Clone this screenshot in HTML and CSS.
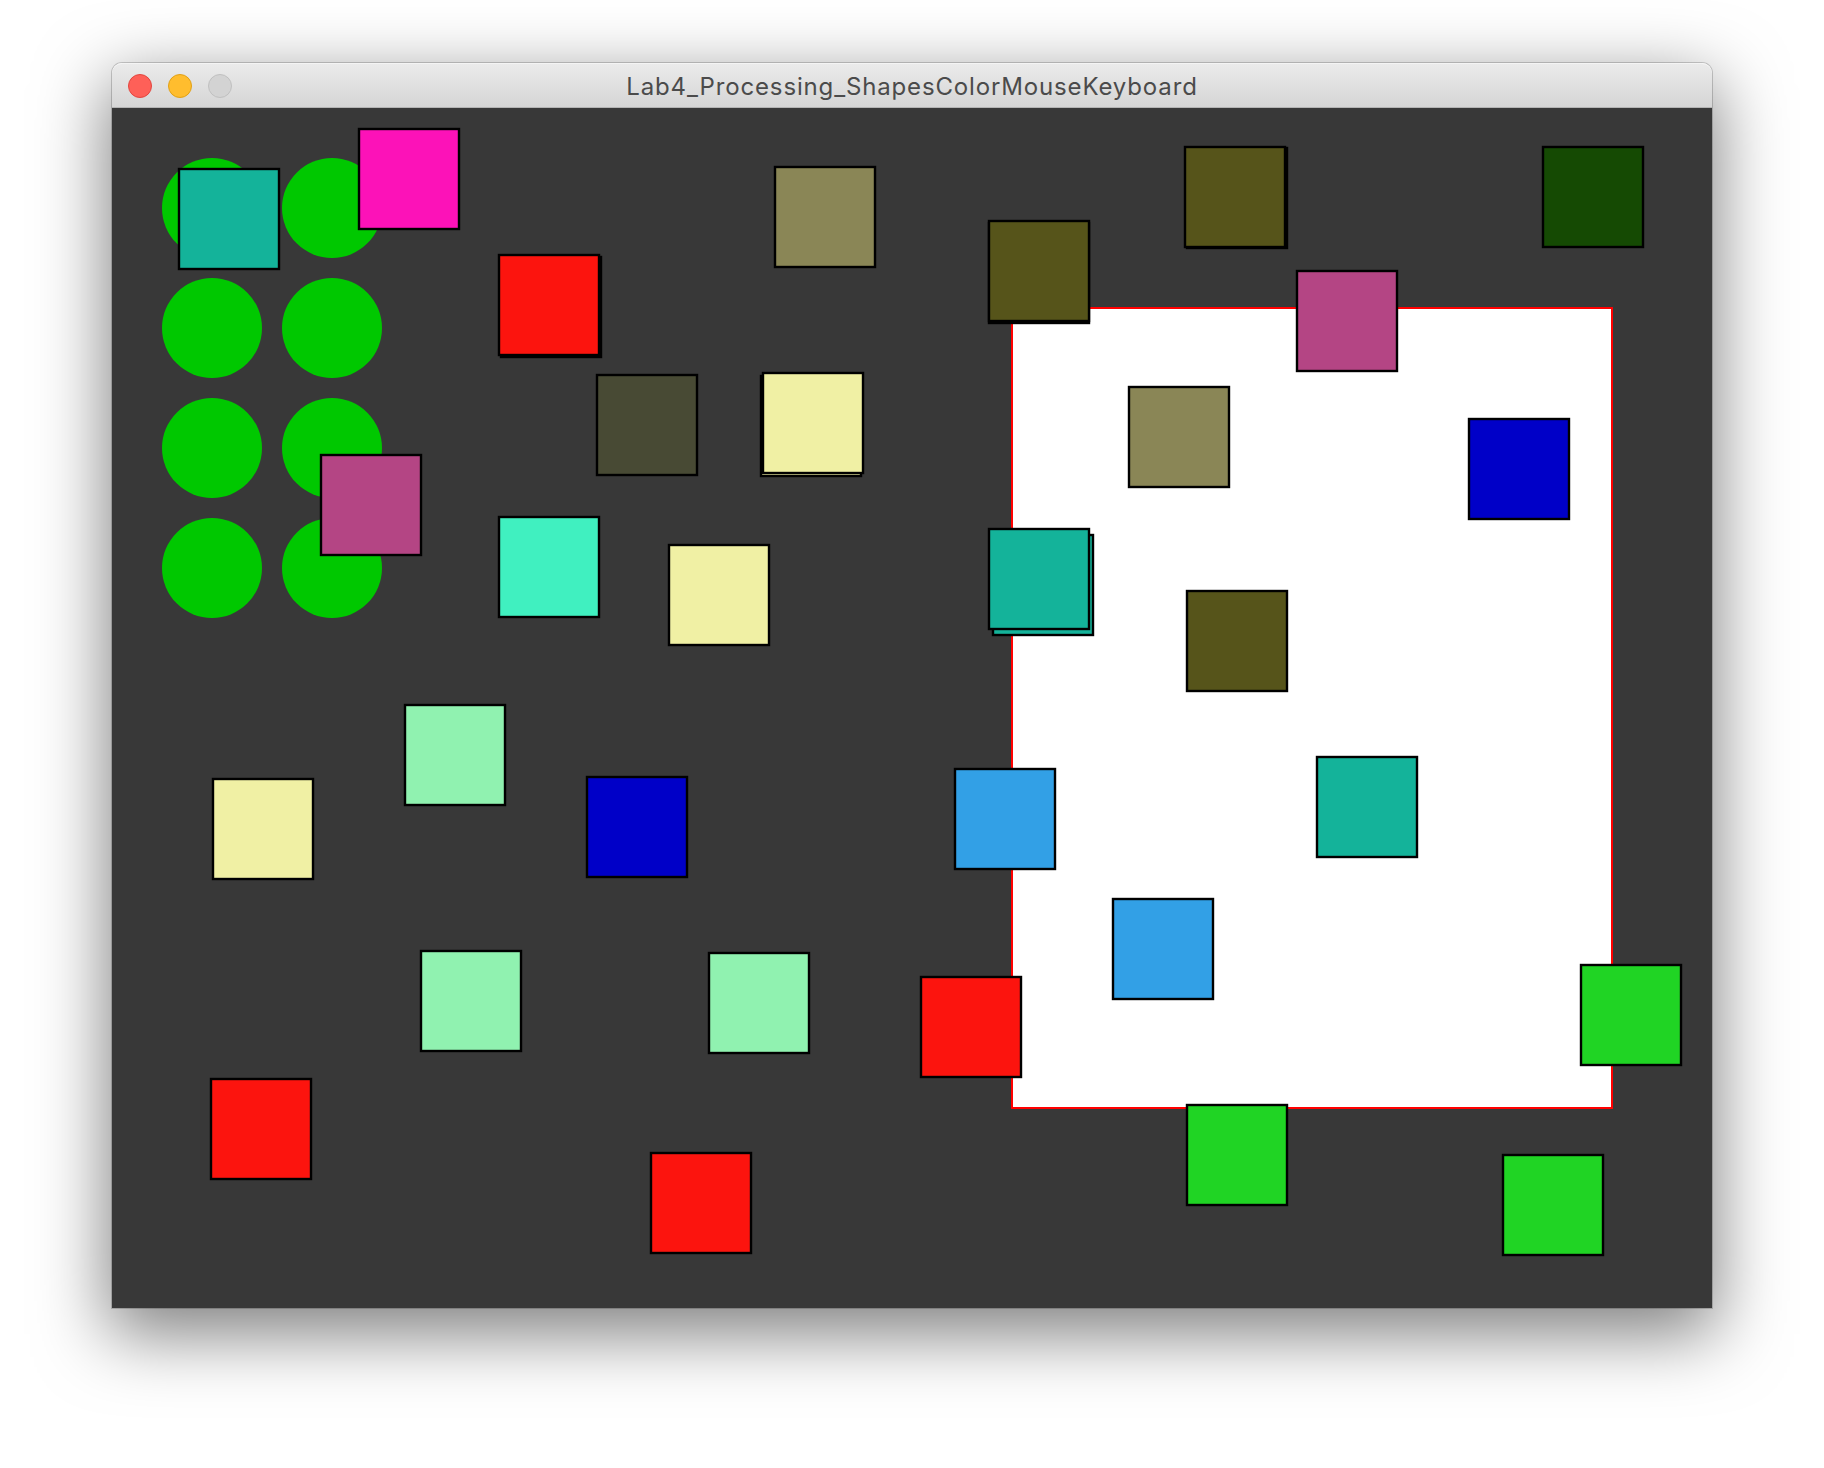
FILE: index.html
```html
<!DOCTYPE html>
<html lang="en">
<head>
<meta charset="utf-8">
<title>Lab4_Processing_ShapesColorMouseKeyboard</title>
<link rel="stylesheet" href="styles.css">
</head>
<body>
<div class="desktop">
  <div class="window">
    <div class="titlebar">
      <div class="lights">
        <span class="light light-close"></span>
        <span class="light light-min"></span>
        <span class="light light-zoom"></span>
      </div>
      <div class="title">Lab4_Processing_ShapesColorMouseKeyboard</div>
      <div class="spacer"></div>
    </div>
    <svg class="canvas" viewBox="0 0 1600 1200" width="1600" height="1200" xmlns="http://www.w3.org/2000/svg">
      <rect class="bg" x="0" y="0" width="1600" height="1200"/>
      <g class="dots">
        <circle cx="100" cy="100" r="50"/>
        <circle cx="220" cy="100" r="50"/>
        <circle cx="100" cy="220" r="50"/>
        <circle cx="220" cy="220" r="50"/>
        <circle cx="100" cy="340" r="50"/>
        <circle cx="220" cy="340" r="50"/>
        <circle cx="100" cy="460" r="50"/>
        <circle cx="220" cy="460" r="50"/>
      </g>
      <rect class="panel" x="900" y="200" width="600" height="800"/>
      <g class="squares">
        <rect class="c-red" x="389" y="149" width="100" height="100"/>
        <rect class="c-yellow" x="649" y="268" width="100" height="100"/>
        <rect class="c-olive" x="877" y="115" width="100" height="100"/>
        <rect class="c-olive" x="1075" y="40" width="100" height="100"/>
        <rect class="c-teal" x="881" y="427" width="100" height="100"/>

        <rect class="c-teal" x="67" y="61" width="100" height="100"/>
        <rect class="c-magenta" x="247" y="21" width="100" height="100"/>
        <rect class="c-red" x="387" y="147" width="100" height="100"/>
        <rect class="c-khaki" x="663" y="59" width="100" height="100"/>
        <rect class="c-olive" x="877" y="113" width="100" height="100"/>
        <rect class="c-olive" x="1073" y="39" width="100" height="100"/>
        <rect class="c-forest" x="1431" y="39" width="100" height="100"/>
        <rect class="c-pink" x="1185" y="163" width="100" height="100"/>
        <rect class="c-slate" x="485" y="267" width="100" height="100"/>
        <rect class="c-yellow" x="651" y="265" width="100" height="100"/>
        <rect class="c-pink" x="209" y="347" width="100" height="100"/>
        <rect class="c-aqua" x="387" y="409" width="100" height="100"/>
        <rect class="c-yellow" x="557" y="437" width="100" height="100"/>
        <rect class="c-teal" x="877" y="421" width="100" height="100"/>
        <rect class="c-khaki" x="1017" y="279" width="100" height="100"/>
        <rect class="c-blue" x="1357" y="311" width="100" height="100"/>
        <rect class="c-olive" x="1075" y="483" width="100" height="100"/>
        <rect class="c-mint" x="293" y="597" width="100" height="100"/>
        <rect class="c-yellow" x="101" y="671" width="100" height="100"/>
        <rect class="c-blue" x="475" y="669" width="100" height="100"/>
        <rect class="c-sky" x="843" y="661" width="100" height="100"/>
        <rect class="c-teal" x="1205" y="649" width="100" height="100"/>
        <rect class="c-sky" x="1001" y="791" width="100" height="100"/>
        <rect class="c-mint" x="309" y="843" width="100" height="100"/>
        <rect class="c-mint" x="597" y="845" width="100" height="100"/>
        <rect class="c-red" x="809" y="869" width="100" height="100"/>
        <rect class="c-green" x="1469" y="857" width="100" height="100"/>
        <rect class="c-red" x="99" y="971" width="100" height="100"/>
        <rect class="c-red" x="539" y="1045" width="100" height="100"/>
        <rect class="c-green" x="1075" y="997" width="100" height="100"/>
        <rect class="c-green" x="1391" y="1047" width="100" height="100"/>
      </g>
    </svg>
  </div>
</div>
</body>
</html>
```

FILE: styles.css
```css
html, body {
  margin: 0;
  padding: 0;
  background: #ffffff;
}

.desktop {
  width: 1824px;
  height: 1468px;
  padding: 63px 0 0 112px;
  box-sizing: border-box;
  overflow: hidden;
}

.window {
  width: 1600px;
  display: flex;
  flex-direction: column;
  border-radius: 10px 10px 0 0;
  box-shadow: 0 22px 70px 4px rgba(0, 0, 0, 0.5), 0 0 0 1px rgba(0, 0, 0, 0.18);
}

.titlebar {
  height: 45px;
  box-sizing: border-box;
  display: grid;
  grid-template-columns: 1fr auto 1fr;
  align-items: center;
  background: linear-gradient(to bottom, #ebebeb 0%, #d5d5d5 100%);
  border-top: 1px solid #f4f4f4;
  border-bottom: 1px solid #b4b4b4;
  border-radius: 10px 10px 0 0;
  padding: 0 16px;
}

.lights {
  display: flex;
  gap: 16px;
  align-items: center;
  padding-top: 1px;
}

.light {
  width: 24px;
  height: 24px;
  border-radius: 50%;
  box-sizing: border-box;
}

.light-close {
  background: #fe6058;
  border: 1px solid #e2463f;
}

.light-min {
  background: #ffbd2e;
  border: 1px solid #e1a116;
}

.light-zoom {
  background: #d3d3d3;
  border: 1px solid #c0c0c0;
}

.title {
  font-family: Inter, "Noto Sans", sans-serif;
  font-size: 24px;
  color: #4b4b4b;
  letter-spacing: 0.85px;
  white-space: nowrap;
  line-height: 1;
  padding-top: 2px;
}

.canvas {
  display: block;
  width: 1600px;
  height: 1200px;
}

.bg {
  fill: #383838;
}

.dots circle {
  fill: #00c800;
}

.panel {
  fill: #ffffff;
  stroke: #ff0000;
  stroke-width: 2;
}

.squares rect {
  stroke: #000000;
  stroke-width: 2.4;
}

.c-teal { fill: #14b39a; }
.c-magenta { fill: #fc12b8; }
.c-red { fill: #fc140e; }
.c-khaki { fill: #8a8656; }
.c-olive { fill: #56541a; }
.c-forest { fill: #154a03; }
.c-pink { fill: #b44584; }
.c-slate { fill: #484a34; }
.c-yellow { fill: #f0f0a4; }
.c-aqua { fill: #40f0c0; }
.c-blue { fill: #0000c8; }
.c-mint { fill: #90f2b0; }
.c-sky { fill: #32a0e6; }
.c-green { fill: #20d424; }
```
